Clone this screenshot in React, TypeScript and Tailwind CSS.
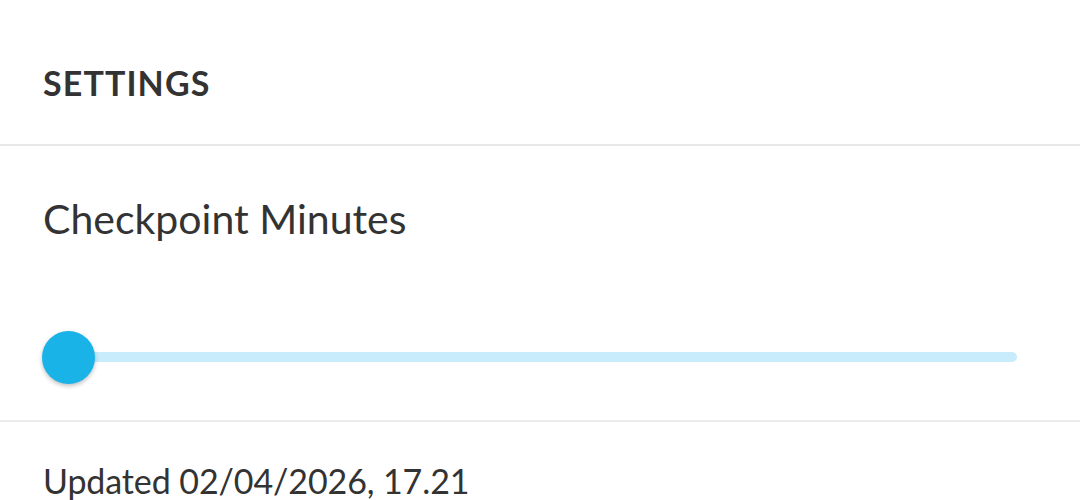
export default function App() {
  return (
    <div className="w-[1080px] h-[500px] overflow-hidden bg-white text-[#333333] font-['Lato',sans-serif]">
      {/* Header */}
      <div className="h-[144px] flex items-center px-[43px] pt-[20px]">
        <h2 className="text-[34px] font-bold tracking-[1.1px]">SETTINGS</h2>
      </div>
      <div className="h-[2px] bg-[#e8e8e8]" />

      {/* Checkpoint slider */}
      <div className="h-[274px] px-[43px] flex flex-col">
        <div className="pt-[52px] text-[41px] leading-none">Checkpoint Minutes</div>
        <div className="relative mt-[92px] h-[52px] flex items-center">
          <div className="h-[10px] w-[974px] rounded-full bg-[#c8ecfb]" />
          <div className="absolute -left-px top-0 w-[53px] h-[53px] rounded-full bg-[#1ab3e8] shadow-[0_2px_4px_rgba(0,0,0,0.25)]" />
        </div>
      </div>
      <div className="h-[2px] bg-[#ebebeb]" />

      {/* Footer */}
      <div className="px-[43px] pt-[42px] text-[34px] leading-none tracking-[-0.1px]">Updated 02/04/2026, 17.21</div>
    </div>
  );
}
